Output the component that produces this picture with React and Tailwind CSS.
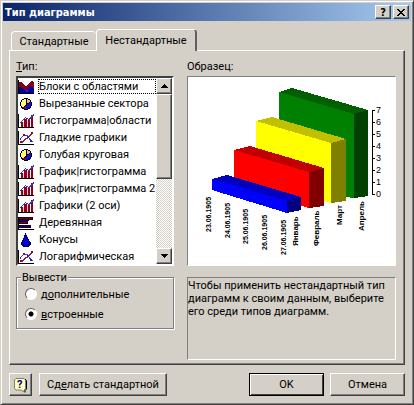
import { useState } from 'react'

const TABS = ['Стандартные', 'Нестандартные']

const CHART_TYPES = [
  { name: 'Блоки с областями',    icon: 'area' },
  { name: 'Вырезанные сектора',   icon: 'pie' },
  { name: 'Гистограмма|области',  icon: 'columns' },
  { name: 'Гладкие графики',      icon: 'line' },
  { name: 'Голубая круговая',     icon: 'pie' },
  { name: 'График|гистограмма',   icon: 'columns' },
  { name: 'График|гистограмма 2', icon: 'columns' },
  { name: 'Графики (2 оси)',      icon: 'columns' },
  { name: 'Деревянная',           icon: 'bars' },
  { name: 'Конусы',               icon: 'cone' },
  { name: 'Логарифмическая',      icon: 'line' },
]

const DATES = [
  { text: '23.06.1905', x: 211, y: 232 },
  { text: '24.06.1905', x: 230, y: 238 },
  { text: '25.06.1905', x: 248, y: 244 },
  { text: '26.06.1905', x: 267, y: 250 },
  { text: '27.06.1905', x: 286, y: 255 },
]

const MONTHS = [
  { text: 'Январь',  x: 298, y: 246 },
  { text: 'Февраль', x: 319, y: 246 },
  { text: 'Март',    x: 342, y: 225 },
  { text: 'Апрель',  x: 364, y: 231 },
]

const RAISED = 'bg-[#d4d0c8] border border-t-white border-l-white border-r-[#404040] border-b-[#404040] shadow-[inset_-1px_-1px_0_#808080]'

// ── Chart type icons ─────────────────────────────────────────
function TypeIcon({ icon }) {
  return (
    <svg className="h-4 w-4 shrink-0" viewBox="0 0 16 16" shapeRendering="crispEdges" aria-hidden="true">
      {icon === 'area' && (
        <>
          <path d="M1 3h2l4 4h2l4-5h2l1 2v10H1z" fill="#880018" />
          <path d="M1 8l3 1 3 3 4-4 2-1 3 3v4H1z" fill="#000098" />
          <path d="M7 10l2 1 3-3-1 4-3 1z" fill="#2020d8" />
          <path d="M0 1h1v13h15v1H0z" fill="#000" />
        </>
      )}
      {icon === 'pie' && (
        <>
          <path d="M6 2h4v1h2v1h1v2h1v4h-1v2h-1v1h-2v1H6v-1H4v-1H3v-2H2V6h1V4h1V3h2z" fill="#000" />
          <path d="M6 3h2v6H7v1H6v1H4v-1H3V6h1V4h2z" fill="#ffff70" />
          <path d="M9 3h1v1h2v2h-1v1H9z" fill="#f8b080" />
          <path d="M13 6v4h-1v2h-2v1H8v-3h1V8h2V7h1V6z" fill="#1010d8" />
          <path d="M5 12v-1h2v-1h1v3H6v-1z" fill="#a00020" />
        </>
      )}
      {icon === 'columns' && (
        <>
          <path d="M0 1h1v13h15v1H0z" fill="#000" />
          <path d="M3 9h2v5H3zM6 6h3v8H6zM10 7h2v7h-2zM13 2h2v12h-2z" fill="#900018" />
          <path d="M5 9h1v5H5zM9 7h1v7H9z" fill="#f0c8c8" />
          <path d="M2 9h1V8h1V7h1V6h1V5h1V4h1v1h2v1h1V5h1V4h1V3h1V2h1V1h1v2h-1v1h-1v1h-1v1h-1v1h-2V6H8V5H7v1H6v1H5v1H4v1H3v1H2z" fill="#3838c0" />
        </>
      )}
      {icon === 'line' && (
        <>
          <path d="M0 1h1v13h15v1H0z" fill="#000" />
          <path d="M2 12h2v-1h1v-1h1V9h1V8h2V7h1V6h1V5h1V4h1V3h1" fill="none" stroke="#902040" />
          <path d="M2 9l4-4h3l4 6h2" fill="none" stroke="#4040d0" />
          <path d="M2 11h2v2H2zM5 4h2v2H5zM13 2h2v2h-2z" fill="#a00020" />
          <path d="M2 8h1v2H2zM9 6h2v2H9zM12 10h2v2h-2z" fill="#2020d0" />
        </>
      )}
      {icon === 'bars' && (
        <>
          <path d="M0 2h1v12h15v1H0z" fill="#000" />
          <path d="M1 2h14v3H1zM1 6h9v3H1zM1 10h12v3H1z" fill="#200010" />
          <path d="M1 3h13v1H1z" fill="#700018" />
          <path d="M1 11h11v1H1zM1 5h10v1H1z" fill="#0000a0" />
          <path d="M1 7h8v1H1z" fill="#700018" />
        </>
      )}
      {icon === 'cone' && (
        <>
          <path d="M7 1h1v2h1v2h1v2h1v2h1v1h1v3h-1v1h-1v1H5v-1H4v-1H3v-3h1V8h1V6h1V3h1z" fill="#000060" />
          <path d="M7 4h1v2h1v2h1v2h1v2h-1v2H6v-1H4v-2h1V9h1V6h1z" fill="#0000e0" />
        </>
      )}
    </svg>
  )
}

// ── 3-D preview ──────────────────────────────────────────────
function ChartPreview() {
  return (
    <svg className="block h-full w-full" viewBox="188 77 207 188" role="img" aria-label="Образец">
      <g shapeRendering="crispEdges">
        <polygon points="279,92 354,114 354,198 346,197 279,176" fill="#008000" />
        <polygon points="279,92 292,88 368,110 354,114" fill="#006000" />
        <polygon points="354,114 368,110 368,196 354,198" fill="#004000" />

        <polygon points="256,121 331,143 331,203 256,181" fill="#ffff00" />
        <polygon points="256,121 272,117 346,139 331,143" fill="#c0c000" />
        <polygon points="331,143 346,139 346,201 331,203" fill="#808000" />

        <polygon points="234,150 309,172 309,208 234,186" fill="#ff0000" />
        <polygon points="234,150 250,146 324,168 309,172" fill="#c00000" />
        <polygon points="309,172 324,168 324,206 309,208" fill="#800000" />

        <polygon points="212,179 287,201 287,213 212,190" fill="#0000ff" />
        <polygon points="212,179 227,175 301,197 287,201" fill="#0000c0" />
        <polygon points="287,201 301,197 301,210 287,213" fill="#000080" />

        <rect x="372" y="110" width="1" height="85" fill="#000" />
        {[0, 1, 2, 3, 4, 5, 6, 7].map((n) => (
          <rect key={n} x="373" y={194 - n * 12} width="2" height="1" fill="#000" />
        ))}
      </g>
      <g className="font-['Liberation_Sans'] text-[9px]">
        {[0, 1, 2, 3, 4, 5, 6, 7].map((n) => (
          <text key={n} x="376" y={197 - n * 12}>{n}</text>
        ))}
      </g>
      <g className="font-['Liberation_Sans'] text-[7px] font-bold">
        {DATES.map((d) => (
          <text key={d.text} transform={`translate(${d.x} ${d.y}) rotate(-90)`}>{d.text}</text>
        ))}
      </g>
      <g className="font-['Liberation_Sans'] text-[8px] font-bold">
        {MONTHS.map((m) => (
          <text key={m.text} transform={`translate(${m.x} ${m.y}) rotate(-90)`}>{m.text}</text>
        ))}
      </g>
    </svg>
  )
}

// ── Scroll bar ───────────────────────────────────────────────
function ScrollBar() {
  return (
    <div className="flex w-4 shrink-0 flex-col bg-[repeating-conic-gradient(#ffffff_0_25%,#d4d0c8_0_50%)] bg-size-[2px_2px]">
      <button type="button" aria-label="Вверх" className={`flex h-4 items-center justify-center ${RAISED}`}>
        <svg className="h-1 w-[7px]" viewBox="0 0 7 4" shapeRendering="crispEdges"><path d="M3 0h1v1h1v1h1v1h1v1H0V3h1V2h1V1h1z" /></svg>
      </button>
      <div className={`h-[85px] ${RAISED}`} />
      <div className="flex-1" />
      <button type="button" aria-label="Вниз" className={`flex h-4 items-center justify-center ${RAISED}`}>
        <svg className="h-1 w-[7px]" viewBox="0 0 7 4" shapeRendering="crispEdges"><path d="M0 0h7v1H6v1H5v1H4v1H3V3H2V2H1V1H0z" /></svg>
      </button>
    </div>
  )
}

function Radio({ checked, onChange, children }) {
  return (
    <label className="flex h-5 items-center gap-1">
      <input
        type="radio"
        name="source"
        checked={checked}
        onChange={onChange}
        className="h-3 w-3 appearance-none rounded-full border border-t-[#606060] border-l-[#606060] border-r-white border-b-white bg-white checked:bg-[radial-gradient(circle,#000_2px,#fff_3px)]"
      />
      <span>{children}</span>
    </label>
  )
}

// ── Dialog ───────────────────────────────────────────────────
export default function App() {
  const [tab, setTab] = useState('Нестандартные')
  const [selected, setSelected] = useState('Блоки с областями')
  const [source, setSource] = useState('builtin')

  return (
    <div className="flex flex-col border border-t-[#d4d0c8] border-l-[#d4d0c8] border-r-[#404040] border-b-[#404040] bg-[#d4d0c8] p-[2px] font-['Roboto','Liberation_Sans',sans-serif] text-[11px] leading-[13px] text-black shadow-[inset_1px_1px_0_#fff,inset_-1px_-1px_0_#808080]">
      {/* Title bar */}
      <header className="flex h-[18px] items-center bg-linear-to-r/srgb from-[#0a246a] to-[#a6caf0] px-[2px] font-['DejaVu_Sans_Condensed',sans-serif] font-bold">
        <h1 className="flex-1 text-white">Тип диаграммы</h1>
        <div className="flex gap-[2px]">
          <button type="button" aria-label="Справка" className={`flex h-[14px] w-4 items-center justify-center ${RAISED}`}>?</button>
          <button type="button" aria-label="Закрыть" className={`flex h-[14px] w-4 items-center justify-center ${RAISED}`}>
            <svg className="h-[7px] w-2" viewBox="0 0 8 7" shapeRendering="crispEdges">
              <path d="M0 0h2v1h1v1h2V1h1V0h2v1H7v1H6v1H5v1h1v1h1v1h1v1H6V6H5V5H3v1H2v1H0V6h1V5h1V4h1V3H2V2H1V1H0z" />
            </svg>
          </button>
        </div>
      </header>

      <main className="px-[6px] pt-2 pb-[6px]">
        {/* Tabs */}
        <div role="tablist" className="flex items-end pl-[2px]">
          {TABS.map((name) => (
            <button
              key={name}
              type="button"
              role="tab"
              aria-selected={tab === name}
              onClick={() => setTab(name)}
              className={
                tab === name
                  ? 'relative -mb-px h-[22px] w-[101px] rounded-t-sm border-t border-r-2 border-l border-t-white border-r-[#606060] border-l-white bg-[#d4d0c8] pb-px'
                  : 'h-[19px] w-[85px] rounded-t-sm border-t border-l border-white'
              }
            >
              {name}
            </button>
          ))}
        </div>

        {/* Tab page */}
        <section className="flex gap-[13px] border border-t-white border-l-white border-r-[#404040] border-b-[#404040] pt-[9px] pr-2 pb-1 pl-[6px] shadow-[inset_-1px_-1px_0_#808080]">
          <div className="w-[158px] shrink-0">
            <div id="type-label" className="h-4"><u>Т</u>ип:</div>
            <div className="flex h-[190px] border-2 border-t-[#404040] border-l-[#404040] border-r-white border-b-white bg-white">
              <ul role="listbox" aria-labelledby="type-label" className="min-w-0 flex-1 overflow-hidden">
                {CHART_TYPES.map((type) => (
                  <li
                    key={type.name}
                    role="option"
                    aria-selected={selected === type.name}
                    onClick={() => setSelected(type.name)}
                    className="flex h-[17px] items-center gap-1 whitespace-nowrap"
                  >
                    <TypeIcon icon={type.icon} />
                    <span className={`flex-1 border border-dotted ${selected === type.name ? 'border-black' : 'border-transparent'}`}>
                      {type.name}
                    </span>
                  </li>
                ))}
              </ul>
              <ScrollBar />
            </div>

            <fieldset className="mt-[5px] h-[58px] border border-[#808080] px-2 shadow-[1px_1px_0_#fff,inset_1px_1px_0_#fff]">
              <legend className="-ml-1 bg-[#d4d0c8] px-px">Вывести</legend>
              <Radio checked={source === 'custom'} onChange={() => setSource('custom')}>д<u>о</u>полнительные</Radio>
              <Radio checked={source === 'builtin'} onChange={() => setSource('builtin')}><u>в</u>строенные</Radio>
            </fieldset>
          </div>

          <div className="min-w-0 flex-1">
            <div className="h-4">Образец:</div>
            <div className="h-[190px] border border-t-[#808080] border-l-[#808080] border-r-white border-b-white bg-white">
              <ChartPreview />
            </div>
            <p className="mt-[11px] h-[83px] border border-t-[#808080] border-l-[#808080] border-r-white border-b-white pt-px leading-[13px]">
              Чтобы применить нестандартный тип диаграмм к своим данным, выберите его среди типов диаграмм.
            </p>
          </div>
        </section>

        {/* Buttons */}
        <footer className="flex items-center pt-2">
          <button type="button" aria-label="Помощник" className={`flex h-[23px] w-[23px] items-center justify-center ${RAISED}`}>
            <svg className="h-4 w-4" viewBox="0 0 16 16" aria-hidden="true">
              <path d="M3 1.500h8l1.500 1.500v8.500l-1.500 1.500v2l-3-2H3l-1.500-1.500V3z" fill="#ffffc0" stroke="#808060" />
              <path d="M12 2l1.500 1.500V12L12 13.500V15.500" fill="none" stroke="#000" />
              <text x="4" y="11" className="text-[11px] font-bold" fill="#000080">?</text>
            </svg>
          </button>
          <button type="button" className={`ml-[7px] h-[23px] w-32 ${RAISED}`}>Сд<u>е</u>лать стандартной</button>
          <div className="flex-1" />
          <button type="button" className="h-[23px] w-[75px] border border-black bg-[#d4d0c8] shadow-[inset_1px_1px_0_#fff,inset_-1px_-1px_0_#404040]">OK</button>
          <button type="button" className={`ml-[6px] h-[23px] w-[75px] ${RAISED}`}>Отмена</button>
        </footer>
      </main>
    </div>
  )
}
